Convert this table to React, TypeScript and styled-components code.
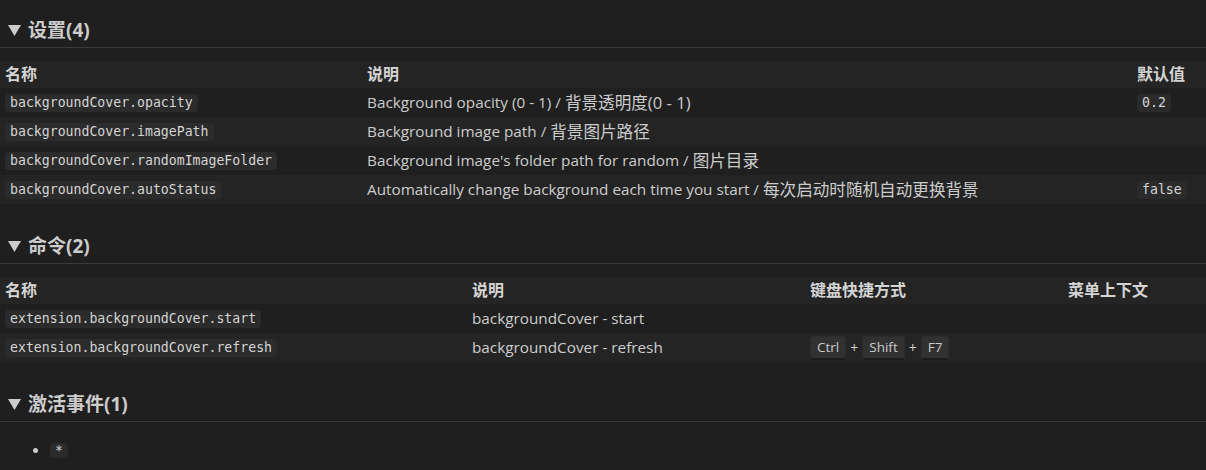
import React, { FC } from "react";
import styled, { createGlobalStyle } from "styled-components";

const GlobalStyle = createGlobalStyle`
    html, body {
        margin: 0;
        padding: 0;
        background: #1f1f1f;
    }
    body {
        font-family: "Open Sans", "Noto Sans CJK SC", sans-serif;
        color: #cccccc;
        font-size: 15.3px;
    }
`;

const Page = styled.div`
    width: 1206px;
    height: 470px;
    overflow: hidden;
    background: #1f1f1f;
`;

const Section = styled.section`
    margin-bottom: 12px;
`;

const Heading = styled.h2`
    margin: 0;
    padding: 17px 0 4px 8px;
    line-height: 26px;
    font-size: 19px;
    font-weight: 700;
    color: #cccccc;
    border-bottom: 1px solid #383838;
    display: flex;
    align-items: center;
    gap: 7px;
`;

const Table = styled.div<{ cols: string }>`
    margin-top: 13px;
    display: grid;
    grid-template-columns: ${p => p.cols};
`;

const Row = styled.div<{ alt?: boolean }>`
    display: contents;
    & > * {
        background: ${p => (p.alt ? "#242424" : "transparent")};
    }
`;

const Th = styled.div`
    padding: 4px 5px;
    line-height: 19px;
    font-weight: 700;
    font-size: 16px;
    color: #d4d4d4;
`;

const Td = styled.div`
    padding: 5px 5px;
    line-height: 19px;
    height: 19px;
    white-space: pre;
    display: flex;
    align-items: center;
`;

const Cjk = styled.span`
    font-size: 16.6px;
`;

const Code = styled.code`
    font-family: "DejaVu Sans Mono", "Liberation Mono", monospace;
    font-size: 13.2px;
    line-height: 18px;
    background: #2b2b2b;
    border-radius: 4px;
    padding: 0 5px;
    color: #d4d4d4;
`;

const Kbd = styled.span`
    display: inline-block;
    font-size: 13.5px;
    line-height: 17px;
    padding: 2px 6px 3px;
    background: #313131;
    border: 1px solid #2c2c2c;
    border-bottom-color: #1a1a1a;
    border-radius: 3px;
    box-shadow: inset 0 -1px 0 #1c1c1c;
    color: #cccccc;
`;

const Plus = styled.span`
    font-size: 14px;
    margin: 0 4px;
`;

const List = styled.ul`
    margin: 18px 0 0;
    padding-left: 50px;
    line-height: 19px;
    li::marker {
        color: #cccccc;
    }
`;

const Triangle: FC = () => (
    <svg width="13" height="11" viewBox="0 0 13 11">
        <polygon points="0,0 13,0 6.5,11" fill="#cccccc" />
    </svg>
);

const settings: [string, string, string, string][] = [
    ["backgroundCover.opacity", "Background opacity (0 - 1) / ", "背景透明度(0 - 1)", "0.2"],
    ["backgroundCover.imagePath", "Background image path / ", "背景图片路径", ""],
    ["backgroundCover.randomImageFolder", "Background image's folder path for random / ", "图片目录", ""],
    ["backgroundCover.autoStatus", "Automatically change background each time you start / ", "每次启动时随机自动更换背景", "false"]
];

const commands: [string, string, string[]][] = [
    ["extension.backgroundCover.start", "backgroundCover - start", []],
    ["extension.backgroundCover.refresh", "backgroundCover - refresh", ["Ctrl", "Shift", "F7"]]
];

export default function App() {
    return (
        <Page>
            <GlobalStyle />
            <Section>
                <Heading>
                    <Triangle />
                    设置(4)
                </Heading>
                <Table cols="362px 770px 1fr">
                    <Row alt>
                        <Th>名称</Th>
                        <Th>说明</Th>
                        <Th>默认值</Th>
                    </Row>
                    {settings.map((s, i) => (
                        <Row key={s[0]} alt={i % 2 === 1}>
                            <Td>
                                <Code>{s[0]}</Code>
                            </Td>
                            <Td>
                                <span>{s[1]}</span>
                                <Cjk>{s[2]}</Cjk>
                            </Td>
                            <Td>{s[3] ? <Code>{s[3]}</Code> : null}</Td>
                        </Row>
                    ))}
                </Table>
            </Section>
            <Section>
                <Heading>
                    <Triangle />
                    命令(2)
                </Heading>
                <Table cols="467px 338px 258px 1fr">
                    <Row alt>
                        <Th>名称</Th>
                        <Th>说明</Th>
                        <Th>键盘快捷方式</Th>
                        <Th>菜单上下文</Th>
                    </Row>
                    {commands.map((c, i) => (
                        <Row key={c[0]} alt={i % 2 === 1}>
                            <Td>
                                <Code>{c[0]}</Code>
                            </Td>
                            <Td>{c[1]}</Td>
                            <Td>
                                {c[2].map((k, j) => (
                                    <React.Fragment key={k}>
                                        {j > 0 && <Plus>+</Plus>}
                                        <Kbd>{k}</Kbd>
                                    </React.Fragment>
                                ))}
                            </Td>
                            <Td />
                        </Row>
                    ))}
                </Table>
            </Section>
            <Section>
                <Heading>
                    <Triangle />
                    激活事件(1)
                </Heading>
                <List>
                    <li>
                        <Code>*</Code>
                    </li>
                </List>
            </Section>
        </Page>
    );
}
